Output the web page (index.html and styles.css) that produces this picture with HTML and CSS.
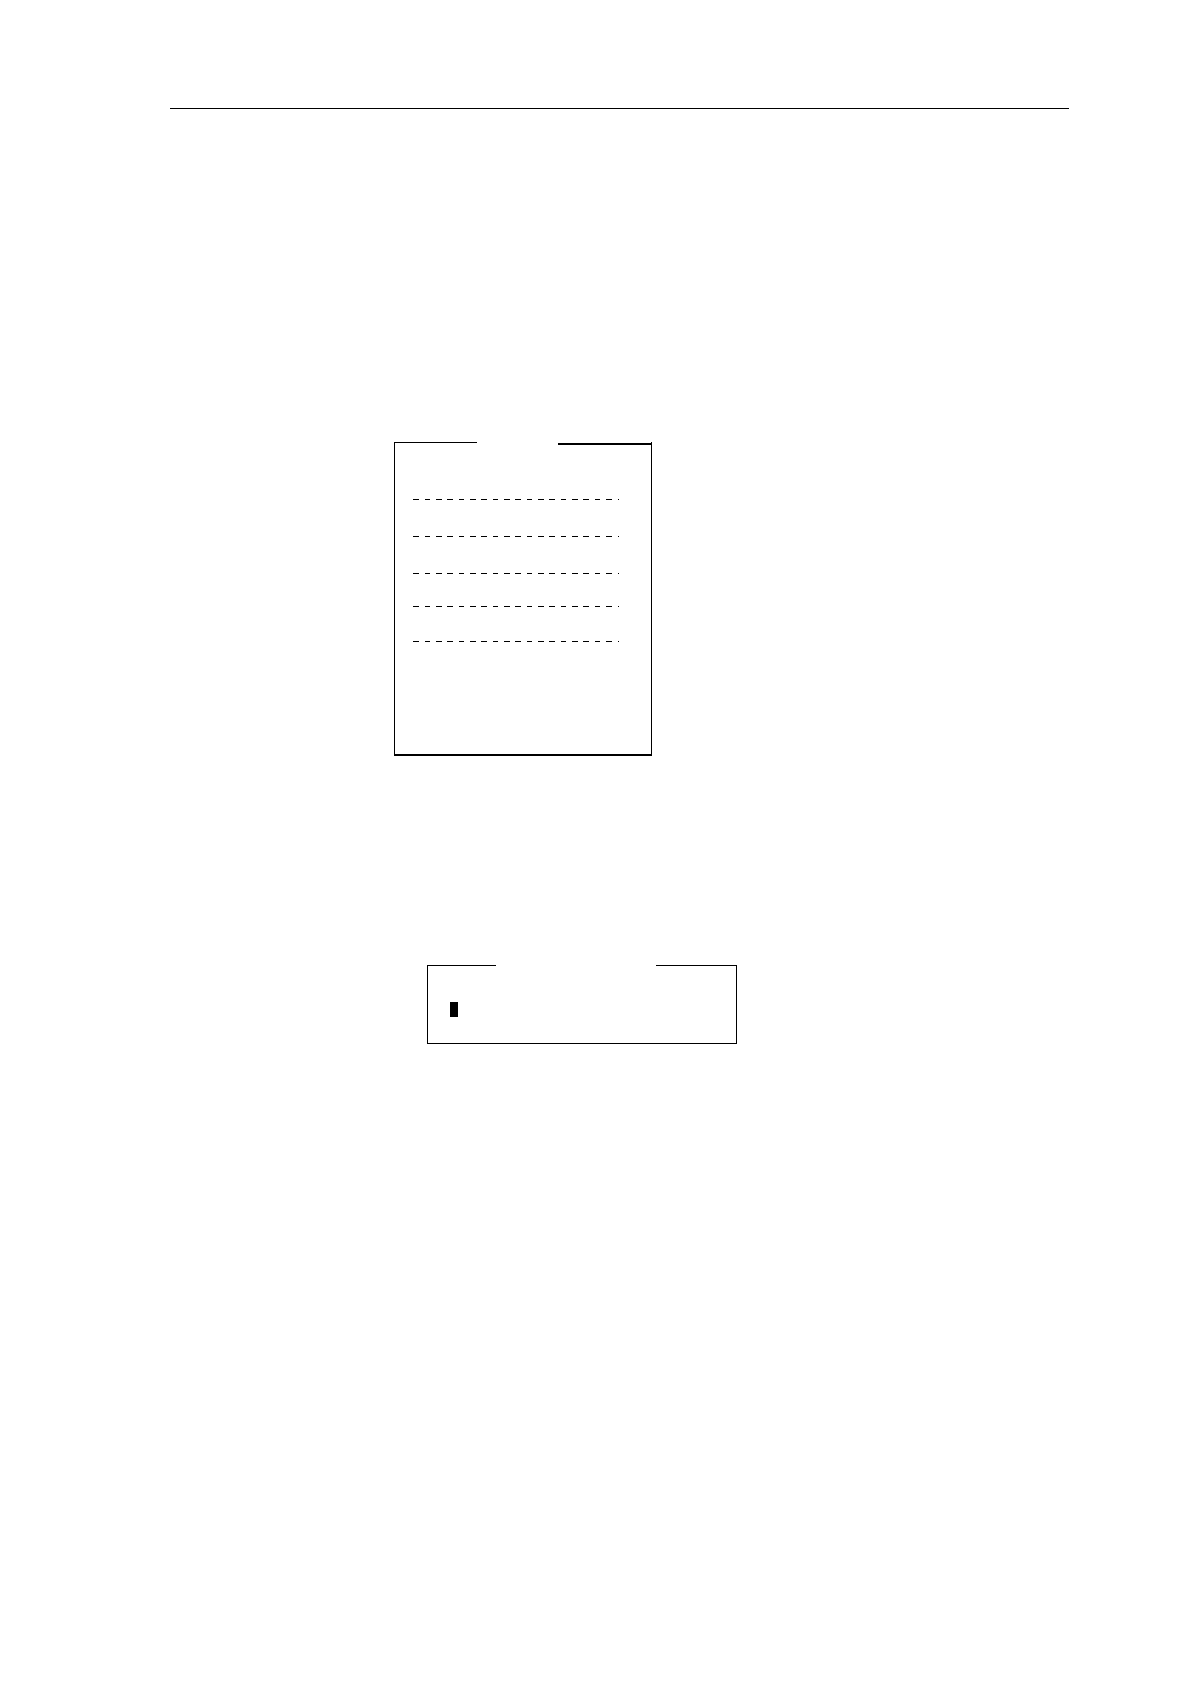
FILE: index.html
```html
<!DOCTYPE html>
<html lang="en">
<head>
  <meta charset="UTF-8" />
  <meta name="viewport" content="width=device-width, initial-scale=1" />
  <link rel="stylesheet" href="styles.css">
</head>
<body>

  <header class="page-header"></header>

  <main>
    <section class="panel menu">
      <div class="panel-top">
        <span class="line"></span>
        <span class="line thick"></span>
      </div>
      <div class="separators">
        <div class="dashes"></div>
        <div class="dashes"></div>
        <div class="dashes"></div>
        <div class="dashes"></div>
        <div class="dashes"></div>
      </div>
    </section>

    <section class="panel prompt">
      <div class="panel-top">
        <span class="line"></span>
        <span class="line"></span>
      </div>
      <div class="cursor"></div>
    </section>
  </main>

</body>
</html>
```
FILE: styles.css
```css
* {
  box-sizing: border-box;
}

body {
  margin: 0;
  padding: 108px 121px 40px 170px;
  background-color: #fff;
  font-family: "Liberation Sans", sans-serif;
}

.page-header {
  border-top: 1px solid #000;
  margin-bottom: 333px;
}

.panel {
  border: 1px solid #000;
  border-top: none;
}

.panel-top {
  display: grid;
  align-items: end;
  height: 3px;
}

.line {
  height: 1px;
  background: #000;
  align-self: start;
}

.line.thick {
  height: 2px;
  align-self: end;
}

.menu {
  max-width: 258px;
  margin-left: 224px;
  padding-bottom: 112px;
  border-bottom-width: 2px;
}

.menu .panel-top {
  grid-template-columns: 82fr 93fr;
  column-gap: 81px;
}

.separators {
  display: grid;
  grid-template-rows: 37px 37px 33px 35px 1px;
  margin: 54px 32px 0 18px;
}

.dashes {
  height: 1px;
  padding-right: 1px;
  border-right: 1px solid #000;
  background: repeating-linear-gradient(to right, #000 0 6px, transparent 6px 12px, #000 12px 17px, transparent 17px 23px, #000 23px 29px, transparent 29px 34px) content-box;
}

.prompt {
  max-width: 310px;
  margin-top: 209px;
  margin-left: 257px;
  padding-bottom: 26px;
}

.prompt .panel-top {
  grid-template-columns: 68fr 80fr;
  column-gap: 160px;
}

.cursor {
  width: 8px;
  height: 15px;
  margin: 34px 0 0 22px;
  background: #000;
}
```
